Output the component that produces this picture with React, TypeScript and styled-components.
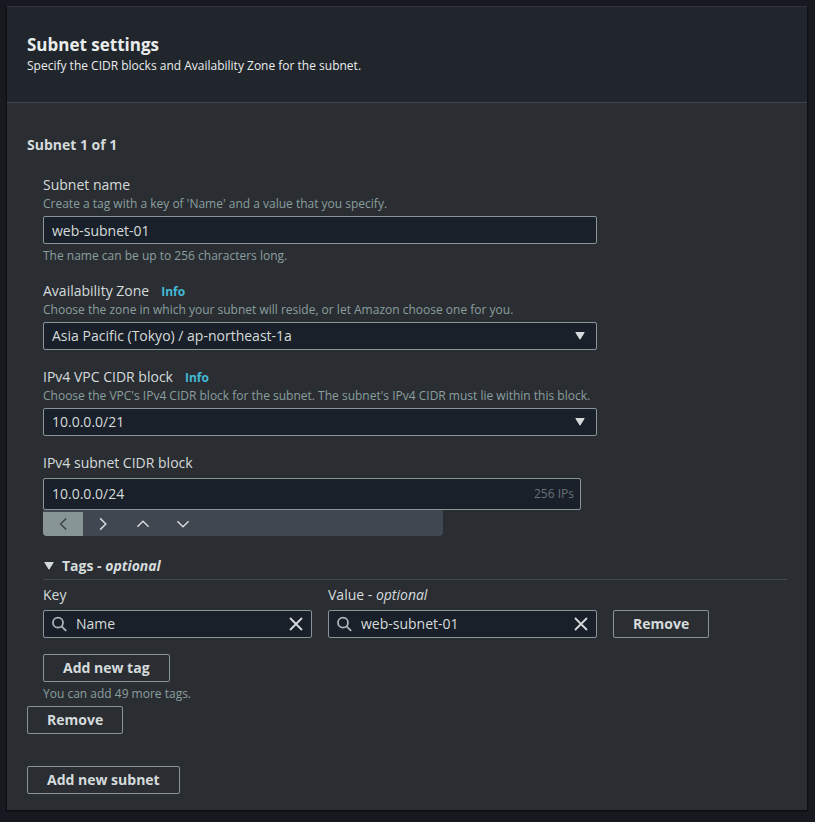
import React, { useId, useState } from "react";
import styled, { createGlobalStyle, css } from "styled-components";

const color = {
  page: "#16191f",
  panel: "#2a2e33",
  header: "#21252c",
  field: "#1a2029",
  divider: "#414750",
  outline: "#879596",
  heading: "#eaeded",
  text: "#d5dbdb",
  muted: "#8a9e9e",
  faint: "#687078",
  link: "#44b9d6",
};

const GlobalStyle = createGlobalStyle`
  *, *::before, *::after { box-sizing: border-box; }
  body {
    margin: 0;
    background: ${color.page};
    color: ${color.text};
    font: 400 14px/22px "Open Sans", "Noto Sans", sans-serif;
  }
  button, input, select { font: inherit; color: inherit; }
  h2, h3, p { margin: 0; }
`;

const Page = styled.main`
  padding: 6px 8px 12px 7px;
`;

const Panel = styled.section`
  background: ${color.panel};
  border-top: 1px solid #2f3338;
  box-shadow: 0 1px 1px 0 #0b0d10, 1px 1px 1px 0 #0e1115, -1px 1px 1px 0 #0e1115;
`;

const PanelHeader = styled.header`
  padding: 27px 20px 26px;
  background: ${color.header};
  border-bottom: 1px solid ${color.divider};
`;

const Title = styled.h2`
  font-size: 17px;
  line-height: 22px;
  font-weight: 700;
  color: ${color.heading};
`;

const Subtitle = styled.p`
  font-size: 12px;
  line-height: 20px;
  color: ${color.heading};
`;

const PanelBody = styled.form`
  padding: 31px 20px 16px;
`;

const SubnetHeading = styled.h3`
  font-size: 14px;
  line-height: 22px;
  font-weight: 700;
`;

const Fields = styled.div`
  padding: 18px 0 4px 16px;
`;

const Columns = styled.div`
  display: grid;
  grid-template-columns: repeat(8, minmax(0, 1fr));
  column-gap: 16px;
  align-items: end;
`;

const Cell = styled.div<{ $span: number }>`
  grid-column: span ${(p) => p.$span};
`;

const FieldStack = styled(Cell)`
  display: flex;
  flex-direction: column;
  gap: 16px;
`;

const LabelRow = styled.div`
  display: flex;
  align-items: baseline;
  gap: 12px;
  margin-bottom: 4px;
`;

const DescribedLabelRow = styled(LabelRow)`
  margin-bottom: 0;
`;

const InfoLink = styled.a`
  font-size: 12px;
  line-height: 16px;
  font-weight: 700;
  color: ${color.link};
  text-decoration: none;
`;

const Description = styled.p`
  margin-bottom: 4px;
  font-size: 12px;
  line-height: 16px;
  color: ${color.muted};
`;

const Hint = styled.p`
  margin-top: 4px;
  font-size: 12px;
  line-height: 16px;
  color: ${color.muted};
`;

const fieldBox = css`
  width: 100%;
  height: 28px;
  border: 1px solid ${color.outline};
  border-radius: 2px;
  background: ${color.field};
`;

const TextInput = styled.input`
  ${fieldBox}
  display: block;
  padding: 0 8px;
`;

const SelectBox = styled.div`
  position: relative;
`;

const Select = styled.select`
  ${fieldBox}
  display: block;
  padding: 0 32px 0 8px;
  appearance: none;
`;

const SelectArrow = styled.svg`
  position: absolute;
  top: 10px;
  right: 12px;
  pointer-events: none;
`;

const CompositeBox = styled.div<{ $tall?: boolean }>`
  ${fieldBox}
  ${(p) => p.$tall && "height: 32px;"}
  display: flex;
  align-items: center;
  gap: 8px;
  padding: 0 ${(p) => (p.$tall ? 6 : 7)}px 0 8px;
`;

const BareInput = styled.input`
  flex: 1;
  min-width: 0;
  padding: 0;
  border: 0;
  outline: 0;
  background: none;
`;

const IpCount = styled.span`
  font-size: 12px;
  color: ${color.faint};
`;

const ClearButton = styled.button`
  display: flex;
  padding: 0;
  border: 0;
  background: none;
`;

const CidrBox = styled.div`
  padding-right: 16px;
`;

const Stepper = styled.div`
  display: flex;
  max-width: 400px;
  padding-top: 2px;
  overflow: hidden;
  border-radius: 0 0 4px 4px;
  background: ${color.divider};
`;

const StepButton = styled.button`
  display: flex;
  align-items: center;
  justify-content: center;
  width: 40px;
  height: 24px;
  padding: 0;
  border: 0;
  background: none;

  &:disabled {
    background: ${color.outline};
    color: ${color.divider};
  }
`;

const TagsToggle = styled.button`
  display: flex;
  align-items: center;
  gap: 8px;
  width: 100%;
  margin: 19px 0 4px;
  padding: 0 0 2px 1px;
  border: 0;
  border-bottom: 1px solid ${color.divider};
  background: none;
  font-weight: 700;
  text-align: left;
`;

const Button = styled.button`
  display: inline-block;
  height: 28px;
  padding: 0 19px;
  border: 1px solid ${color.outline};
  border-radius: 2px;
  background: none;
  font-weight: 700;
  line-height: 22px;
  white-space: nowrap;
`;

const AddTag = styled.div`
  margin-top: 16px;
`;

const Footer = styled.div`
  margin-top: 32px;
`;

const Triangle = () => (
  <path d="M.8.5h8.4L5 7.2z" fill="currentColor" stroke="currentColor" strokeLinejoin="round" />
);

const SearchIcon = () => (
  <svg width="16" height="16" viewBox="0 0 16 16" fill="none" stroke="#aab7b8" strokeWidth="1.8" aria-hidden="true">
    <circle cx="6" cy="6.7" r="5" />
    <path d="M9.6 10.3l4.6 4.6" />
  </svg>
);

const CloseIcon = () => (
  <svg width="16" height="16" viewBox="0 0 16 16" fill="none" stroke="currentColor" strokeWidth="1.8" aria-hidden="true">
    <path d="M2 2l12 12M14 2L2 14" />
  </svg>
);

const steps = [
  { name: "Previous block", d: "M11 1.5l-6 6 6 6", disabled: true },
  { name: "Next block", d: "M4.5 1.5l6 6-6 6" },
  { name: "Larger block", d: "M1.5 10.5l6-6 6 6" },
  { name: "Smaller block", d: "M1.5 4.5l6 6 6-6" },
];

function LabelText({ id, text, optional, info, description }: {
  id: string;
  text: string;
  optional?: boolean;
  info?: boolean;
  description?: string;
}) {
  const Row = description ? DescribedLabelRow : LabelRow;
  return (
    <>
      <Row>
        <label htmlFor={id}>
          {text}
          {optional && <> - <i>optional</i></>}
        </label>
        {info && <InfoLink href="#info">Info</InfoLink>}
      </Row>
      {description && <Description id={`${id}-description`}>{description}</Description>}
    </>
  );
}

function SelectField({ label, description, option }: { label: string; description: string; option: string }) {
  const id = useId();
  return (
    <div>
      <LabelText id={id} text={label} info description={description} />
      <SelectBox>
        <Select id={id} aria-describedby={`${id}-description`}>
          <option>{option}</option>
        </Select>
        <SelectArrow width="10" height="8" viewBox="0 0 10 8" aria-hidden="true">
          <Triangle />
        </SelectArrow>
      </SelectBox>
    </div>
  );
}

function TagField({ label, optional, initial }: { label: string; optional?: boolean; initial: string }) {
  const id = useId();
  const [value, setValue] = useState(initial);
  return (
    <Cell $span={3}>
      <LabelText id={id} text={label} optional={optional} />
      <CompositeBox>
        <SearchIcon />
        <BareInput id={id} value={value} onChange={(e) => setValue(e.target.value)} />
        <ClearButton type="button" aria-label={`Clear ${label}`} onClick={() => setValue("")}>
          <CloseIcon />
        </ClearButton>
      </CompositeBox>
    </Cell>
  );
}

export default function App() {
  const [tagsOpen, setTagsOpen] = useState(true);
  return (
    <>
      <GlobalStyle />
      <Page>
        <Panel>
          <PanelHeader>
            <Title>Subnet settings</Title>
            <Subtitle>Specify the CIDR blocks and Availability Zone for the subnet.</Subtitle>
          </PanelHeader>
          <PanelBody onSubmit={(e) => e.preventDefault()}>
            <SubnetHeading>Subnet 1 of 1</SubnetHeading>
            <Fields>
              <Columns>
                <FieldStack $span={6}>
                  <div>
                    <LabelText
                      id="subnet-name"
                      text="Subnet name"
                      description="Create a tag with a key of 'Name' and a value that you specify."
                    />
                    <TextInput
                      id="subnet-name"
                      aria-describedby="subnet-name-description"
                      defaultValue="web-subnet-01"
                    />
                    <Hint>The name can be up to 256 characters long.</Hint>
                  </div>
                  <SelectField
                    label="Availability Zone"
                    description="Choose the zone in which your subnet will reside, or let Amazon choose one for you."
                    option="Asia Pacific (Tokyo) / ap-northeast-1a"
                  />
                  <SelectField
                    label="IPv4 VPC CIDR block"
                    description="Choose the VPC's IPv4 CIDR block for the subnet. The subnet's IPv4 CIDR must lie within this block."
                    option="10.0.0.0/21"
                  />
                  <CidrBox>
                    <LabelText id="subnet-cidr" text="IPv4 subnet CIDR block" />
                    <CompositeBox $tall>
                      <BareInput id="subnet-cidr" defaultValue="10.0.0.0/24" />
                      <IpCount>256 IPs</IpCount>
                    </CompositeBox>
                    <Stepper>
                      {steps.map((step) => (
                        <StepButton key={step.name} type="button" aria-label={step.name} disabled={step.disabled}>
                          <svg width="14" height="14" viewBox="0 0 15 15" fill="none" stroke="currentColor" strokeWidth="1.6" aria-hidden="true">
                            <path d={step.d} />
                          </svg>
                        </StepButton>
                      ))}
                    </Stepper>
                  </CidrBox>
                </FieldStack>
              </Columns>
              <TagsToggle type="button" aria-expanded={tagsOpen} onClick={() => setTagsOpen(!tagsOpen)}>
                <svg width="10" height="8" viewBox="0 0 10 8" aria-hidden="true">
                  <Triangle />
                </svg>
                <span>Tags - <i>optional</i></span>
              </TagsToggle>
              {tagsOpen && (
                <>
                  <Columns>
                    <TagField label="Key" initial="Name" />
                    <TagField label="Value" optional initial="web-subnet-01" />
                    <Cell $span={2}>
                      <Button type="button">Remove</Button>
                    </Cell>
                  </Columns>
                  <AddTag>
                    <Button type="button">Add new tag</Button>
                    <Hint>You can add 49 more tags.</Hint>
                  </AddTag>
                </>
              )}
            </Fields>
            <Button type="button">Remove</Button>
            <Footer>
              <Button type="button">Add new subnet</Button>
            </Footer>
          </PanelBody>
        </Panel>
      </Page>
    </>
  );
}
